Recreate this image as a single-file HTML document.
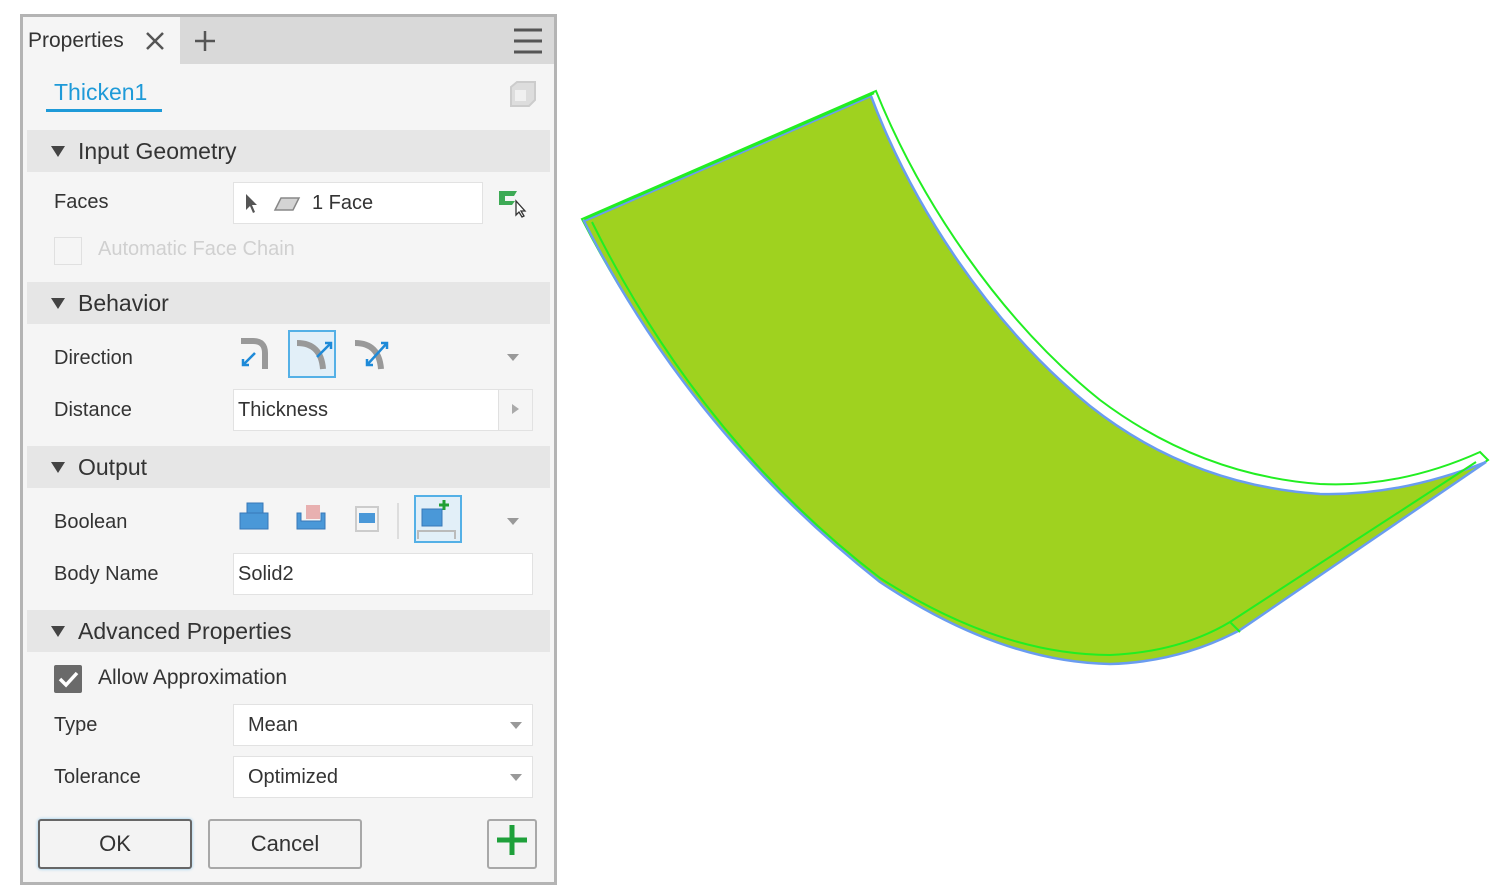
<!DOCTYPE html>
<html><head><meta charset="utf-8"><style>
*{box-sizing:border-box;margin:0;padding:0}
body{width:1512px;height:886px;background:#fff;position:relative;overflow:hidden;font-family:"Liberation Sans",sans-serif;color:#333;font-size:20px}
.a{position:absolute}
#panel{left:20px;top:14px;width:537px;height:871px;background:#f5f5f5;border:3px solid #b4b4b4}
.hdr{position:absolute;left:4px;right:4px;height:42px;background:#e6e6e6;font-size:23px;line-height:42px;padding-left:51px;color:#333}
.hdr:before{content:"";position:absolute;left:24px;top:16px;border-left:7px solid transparent;border-right:7px solid transparent;border-top:11px solid #444}
.lbl{position:absolute;left:31px;font-size:20px}
.inp{position:absolute;left:210px;width:300px;height:42px;background:#fff;border:1px solid #e2e2e2;font-size:20px;line-height:40px;padding-left:4px}
.dd:after{content:"";position:absolute;right:10px;top:17px;border-left:6px solid transparent;border-right:6px solid transparent;border-top:7px solid #999}
.btn{position:absolute;top:802px;height:50px;border:2px solid #a8a8a8;border-radius:3px;background:#f3f3f3;font-size:22px;text-align:center;line-height:46px}
</style></head><body>
<div id="panel" class="a">
 <div class="a" style="left:0;top:0;width:531px;height:47px;background:#d9d9d9"></div>
 <div class="a" style="left:0;top:0;width:157px;height:47px;background:#f5f5f5;font-size:21px;line-height:48px;padding-left:5px">Properties</div>
 <svg class="a" style="left:120px;top:12px" width="24" height="24"><path d="M4 4L20 20M20 4L4 20" stroke="#555" stroke-width="2.5"/></svg>
 <svg class="a" style="left:170px;top:12px" width="24" height="24"><path d="M12 2V22M2 12H22" stroke="#555" stroke-width="2.5"/></svg>
 <svg class="a" style="left:490px;top:10px" width="30" height="28"><path d="M1 3H29M1 14H29M1 25H29" stroke="#555" stroke-width="3"/></svg>
 <div class="a" style="left:31px;top:62px;font-size:23px;color:#1e9ad8">Thicken1</div>
 <div class="a" style="left:23px;top:92px;width:116px;height:3px;background:#1e9ad8"></div>
 <svg class="a" style="left:485px;top:62px" width="30" height="30"><path d="M3 8L9 3H27V21L21 27H3Z" fill="#ddd" stroke="#ccc" stroke-width="2"/><rect x="7" y="11" width="11" height="11" fill="#f0f0f0"/></svg>

 <div class="hdr" style="top:113px">Input Geometry</div>
 <div class="lbl" style="top:174px">Faces</div>
 <div class="inp" style="top:165px;width:250px;padding-left:78px">1 Face</div>
 <svg class="a" style="left:220px;top:175px" width="60" height="24"><path d="M3 2L3 18L7 14L10 21L12 20L9 13L14 13Z" fill="#555"/><path d="M32 18L38 6H56L50 18Z" fill="#d4d4d4" stroke="#888" stroke-width="1.5"/></svg>
 <svg class="a" style="left:474px;top:170px" width="34" height="32"><path d="M2 4H20L17 9H8V14H18L15 18H2Z" fill="#3daa55"/><path d="M19 14V28L22 25L25 30L27 29L24 24H28Z" fill="#fff" stroke="#333" stroke-width="1.3"/></svg>
 <div class="a" style="left:31px;top:220px;width:28px;height:28px;border:1px solid #e0e0e0;background:#f5f5f5"></div>
 <div class="a" style="left:75px;top:221px;color:#d0d0d0">Automatic Face Chain</div>

 <div class="hdr" style="top:265px">Behavior</div>
 <div class="lbl" style="top:330px">Direction</div>
 <div class="a" style="left:265px;top:313px;width:48px;height:48px;border:2px solid #54b0e6;background:#e2eff8"></div>
 <svg class="a" style="left:212px;top:318px" width="180" height="38"><g fill="none"><path d="M6 6H18Q30 6 30 18V34" stroke="#999" stroke-width="6"/><path d="M20 18L8 30M8 24V30H14" stroke="#1e8ad8" stroke-width="2.5"/><path d="M62 8Q86 8 88 34" stroke="#999" stroke-width="6"/><path d="M82 22L96 8M90 8H96V14" stroke="#1e8ad8" stroke-width="2.5"/><path d="M120 8Q144 8 146 34" stroke="#999" stroke-width="6"/><path d="M132 30L152 8M146 8H152V14M132 24V30H138" stroke="#1e8ad8" stroke-width="2.5"/></g></svg>
 <div class="a dd" style="left:476px;top:320px;width:30px;height:30px"></div>
 <div class="lbl" style="top:382px">Distance</div>
 <div class="inp" style="top:372px">Thickness</div>
 <div class="a" style="left:475px;top:373px;width:34px;height:40px;background:#f5f5f5;border-left:1px solid #e0e0e0"></div>
 <div class="a" style="left:489px;top:387px;border-top:5px solid transparent;border-bottom:5px solid transparent;border-left:7px solid #aaa"></div>

 <div class="hdr" style="top:429px">Output</div>
 <div class="lbl" style="top:494px">Boolean</div>
 <div class="a" style="left:391px;top:478px;width:48px;height:48px;border:2px solid #54b0e6;background:#e2eff8"></div>
 <svg class="a" style="left:212px;top:482px" width="240" height="44"><rect x="12" y="4" width="16" height="12" fill="#4a98d8" stroke="#3878b8"/><rect x="5" y="14" width="28" height="16" fill="#4a98d8" stroke="#3878b8"/><rect x="71" y="6" width="14" height="14" fill="#e8b0b0"/><path d="M62 14V30H90V14H86V22H66V14Z" fill="#4a98d8" stroke="#3878b8"/><rect x="121" y="8" width="22" height="24" fill="none" stroke="#ccc" stroke-width="2"/><rect x="124" y="14" width="16" height="10" fill="#4a98d8"/><rect x="162" y="4" width="2" height="36" fill="#ddd"/><rect x="187" y="10" width="20" height="17" fill="#4a98d8" stroke="#3878b8"/><path d="M204 6H214M209 1V11" stroke="#21a035" stroke-width="3"/><path d="M183 40V32H220V40" fill="none" stroke="#bbb" stroke-width="2"/></svg>
 <div class="a dd" style="left:476px;top:484px;width:30px;height:30px"></div>
 <div class="lbl" style="top:546px">Body Name</div>
 <div class="inp" style="top:536px">Solid2</div>

 <div class="hdr" style="top:593px">Advanced Properties</div>
 <div class="a" style="left:31px;top:648px;width:28px;height:28px;background:#6a6a6a;border-radius:2px"></div>
 <svg class="a" style="left:31px;top:648px" width="28" height="28"><path d="M6 14L12 20L23 8" fill="none" stroke="#fff" stroke-width="3.5"/></svg>
 <div class="a" style="left:75px;top:649px;font-size:21px">Allow Approximation</div>
 <div class="lbl" style="top:697px">Type</div>
 <div class="inp dd" style="top:687px;padding-left:14px">Mean</div>
 <div class="lbl" style="top:749px">Tolerance</div>
 <div class="inp dd" style="top:739px;padding-left:14px">Optimized</div>

 <div class="btn" style="left:15px;width:154px;border-color:#666;box-shadow:0 0 3px #8cc8ee">OK</div>
 <div class="btn" style="left:185px;width:154px">Cancel</div>
 <div class="btn" style="left:464px;width:50px;padding-top:2px"><svg width="34" height="34"><path d="M17 2V32M2 17H32" stroke="#1ea03a" stroke-width="5"/></svg></div>
</div>

<svg class="a" style="left:0;top:0" width="1512" height="886">
 <path d="M582,219 L876,91 C920,200 1000,320 1100,400 Q1200,475 1320,484 Q1400,488 1480,452 L1488,460 L1240,630 Q1180,660 1110,662 Q1000,660 880,580 Q690,430 582,219Z" fill="#fff" stroke="#22ee22" stroke-width="2"/>
 <path d="M584,221 L871,96 C912,205 990,325 1090,406 Q1190,485 1320,494 Q1400,496 1486,462 L1240,630 Q1180,662 1110,664 Q1000,662 880,582 Q690,432 584,221Z" fill="#9fd21f" stroke="#6a9cf0" stroke-width="2.5"/>
 <path d="M592,222 Q700,440 880,578 Q1000,655 1110,655 Q1180,652 1230,622 L1476,462" fill="none" stroke="#22ee22" stroke-width="2"/>
 <path d="M1230,622 L1240,632" stroke="#22ee22" stroke-width="2"/>
 <path d="M584,219 L874,93" stroke="#22ee22" stroke-width="2.5"/>
</svg>
</body></html>
